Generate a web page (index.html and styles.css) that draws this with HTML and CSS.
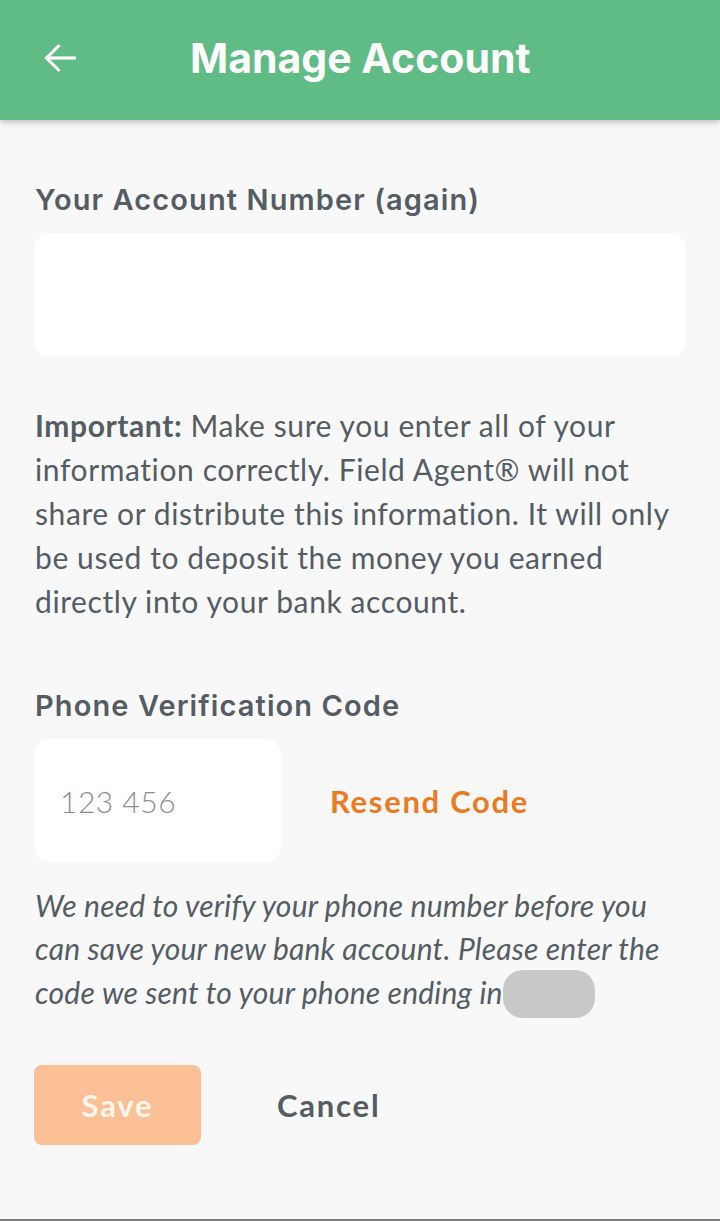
FILE: index.html
```html
<!DOCTYPE html>
<html>
<head>
    <meta charset="UTF-8">
    <title>Manage Account</title>
    <link rel="stylesheet" href="styles.css">
</head>
<body>
    <header class="topbar">
        <a href="#" class="back">
            <svg width="38" height="38" viewBox="0 0 24 24" fill="none" stroke="#fff" stroke-width="2" stroke-linecap="square">
                <path d="M21 12H4"/>
                <path d="M11 4.5L3.5 12l7.5 7.5"/>
            </svg>
        </a>
        <h1>Manage Account</h1>
    </header>
    <div class="content">
        <label class="field-label" for="account">Your Account Number (again)</label>
        <input class="field" type="text" id="account">
        <p class="notice"><b>Important:</b> Make sure you enter all of your information correctly. Field Agent&reg; will not share or distribute this information. It will only be used to deposit the money you earned directly into your bank account.</p>

        <label class="field-label phone-label" for="code">Phone Verification Code</label>
        <div class="code-row">
            <input class="field code" type="text" id="code" placeholder="123 456">
            <a href="#" class="resend">Resend Code</a>
        </div>
        <p class="hint">We need to verify your phone number before you can save your new bank account. Please enter the code we sent to your phone ending in<span class="masked"></span></p>

        <div class="actions">
            <button type="button" class="save">Save</button>
            <button type="button" class="cancel">Cancel</button>
        </div>
    </div>
    <div class="bottom-line"></div>
</body>
</html>
```

FILE: styles.css
```css
html, body {
    margin: 0;
    padding: 0;
}
body {
    background-color: #F8F8F8;
    color: #545C64;
    font-family: Lato, "Noto Sans", sans-serif;
    height: 1221px;
    position: relative;
}
.topbar {
    background-color: #5FBC84;
    height: 120px;
    display: flex;
    align-items: center;
    box-shadow: 0 3px 5px rgba(0, 0, 0, 0.2);
}
.back {
    display: flex;
    margin-left: 41px;
    margin-top: -4px;
}
h1 {
    color: #FFFFFF;
    font-family: Inter, "Noto Sans", sans-serif;
    font-size: 41px;
    font-weight: 700;
    margin: 0 0 0 111px;
    margin-top: -4px;
}
.content {
    padding: 0 34px;
}
.field-label {
    display: block;
    font-family: Inter, "Noto Sans", sans-serif;
    font-size: 29px;
    font-weight: 600;
    letter-spacing: 1.1px;
    margin-top: 62px;
    margin-left: 1px;
    line-height: 36px;
}
.field {
    display: block;
    box-sizing: border-box;
    width: 652px;
    height: 123px;
    border: none;
    border-radius: 16px;
    background: #FFFFFF;
    margin-top: 15px;
    font-family: Lato, sans-serif;
    font-size: 30px;
    padding: 0 26px;
    color: #545C64;
    outline: none;
}
.notice {
    font-size: 30px;
    letter-spacing: 0.6px;
    line-height: 44px;
    margin: 47px 0 0 1px;
}
.notice b {
    font-weight: 700;
}
.phone-label {
    margin-top: 65px;
}
.code-row {
    display: flex;
    align-items: center;
    margin-top: 15px;
}
.field.code {
    width: 247px;
    margin-top: 0;
    font-weight: 300;
    letter-spacing: 0.5px;
}
.field.code::placeholder {
    color: #8A8E92;
    font-weight: 300;
}
.resend {
    color: #EC7A23;
    font-size: 31px;
    font-weight: 700;
    text-decoration: none;
    margin-left: 49px;
    letter-spacing: 1.7px;
}
.hint {
    font-style: italic;
    font-size: 30px;
    letter-spacing: 0.2px;
    line-height: 43px;
    margin: 22px 0 0 1px;
}
.masked {
    display: inline-block;
    width: 92px;
    height: 48px;
    background: #C8C8C8;
    border-radius: 20px;
    vertical-align: -14px;
}
.actions {
    display: flex;
    align-items: center;
    margin-top: 47px;
}
.save {
    width: 167px;
    height: 80px;
    border: none;
    border-radius: 8px;
    background: #FBC096;
    color: #FFF6EE;
    font-family: Lato, sans-serif;
    font-size: 31px;
    font-weight: 700;
    letter-spacing: 1.8px;
}
.cancel {
    border: none;
    background: none;
    color: #545C64;
    font-family: Lato, sans-serif;
    font-size: 31px;
    font-weight: 700;
    letter-spacing: 1.8px;
    margin-left: 76px;
    padding: 0;
}
.bottom-line {
    position: absolute;
    left: 0;
    right: 0;
    bottom: 0;
    height: 2px;
    background: #7A7A7A;
}
```
